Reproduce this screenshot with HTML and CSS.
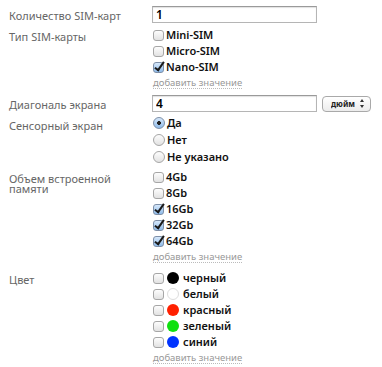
FILE: index.html
```html
<!DOCTYPE html>
<html lang="ru">
<head>
<meta charset="utf-8">
<link rel="stylesheet" href="styles.css">
</head>
<body>
<form class="form">
  <div class="label">Количество SIM-карт</div>
  <div class="field"><input class="text" type="text" value="1"></div>

  <div class="label">Тип SIM-карты</div>
  <div class="field">
    <label class="opt"><input class="cb" type="checkbox"><span>Mini-SIM</span></label>
    <label class="opt"><input class="cb" type="checkbox"><span>Micro-SIM</span></label>
    <label class="opt"><input class="cb" type="checkbox" checked><span>Nano-SIM</span></label>
    <a class="add" href="#">добавить значение</a>
  </div>

  <div class="label">Диагональ экрана</div>
  <div class="field inline">
    <input class="text" type="text" value="4">
    <span class="sel"><select><option>дюйм</option></select></span>
  </div>

  <div class="label">Сенсорный экран</div>
  <div class="field radios">
    <label class="opt"><input class="rb" type="radio" name="touch" checked><span>Да</span></label>
    <label class="opt"><input class="rb" type="radio" name="touch"><span>Нет</span></label>
    <label class="opt"><input class="rb" type="radio" name="touch"><span>Не указано</span></label>
  </div>

  <div class="label">Объем встроенной памяти</div>
  <div class="field">
    <label class="opt"><input class="cb" type="checkbox"><span>4Gb</span></label>
    <label class="opt"><input class="cb" type="checkbox"><span>8Gb</span></label>
    <label class="opt"><input class="cb" type="checkbox" checked><span>16Gb</span></label>
    <label class="opt"><input class="cb" type="checkbox" checked><span>32Gb</span></label>
    <label class="opt"><input class="cb" type="checkbox" checked><span>64Gb</span></label>
    <a class="add" href="#">добавить значение</a>
  </div>

  <div class="label colors">Цвет</div>
  <div class="field colors">
    <label class="opt"><input class="cb" type="checkbox"><i class="sw black"></i><span>черный</span></label>
    <label class="opt"><input class="cb" type="checkbox"><i class="sw white"></i><span>белый</span></label>
    <label class="opt"><input class="cb" type="checkbox"><i class="sw red"></i><span>красный</span></label>
    <label class="opt"><input class="cb" type="checkbox"><i class="sw green"></i><span>зеленый</span></label>
    <label class="opt"><input class="cb" type="checkbox"><i class="sw blue"></i><span>синий</span></label>
    <a class="add" href="#">добавить значение</a>
  </div>
</form>
</body>
</html>
```
FILE: styles.css
```css
html, body {
  margin: 0;
  padding: 0;
  background: #fff;
}
body {
  font-family: "Noto Sans", "DejaVu Sans", sans-serif;
  font-size: 11px;
  color: #000;
}
.form {
  display: grid;
  grid-template-columns: 143px 1fr;
  row-gap: 4px;
  padding: 6px 0 0 9px;
}
.label {
  color: #666;
  font-size: 11px;
  line-height: 10px;
  padding-top: 5px;
  width: 118px;
}
.field {
  display: flex;
  flex-direction: column;
  align-items: flex-start;
}
.field.inline {
  flex-direction: row;
  align-items: center;
  gap: 5px;
}
.field.radios {
  margin-top: -2px;
}
.label.colors,
.field.colors {
  margin-top: 1px;
}
.text {
  box-sizing: border-box;
  width: 165px;
  height: 17px;
  margin: 0;
  padding: 0 3px;
  border: 1px solid #b5b5b5;
  border-top-color: #9a9a9a;
  box-shadow: inset 0 1px 1px rgba(0,0,0,0.12);
  font-family: "Noto Sans", sans-serif;
  font-size: 12px;
  font-weight: 600;
  color: #000;
  outline: none;
}
.opt {
  display: flex;
  align-items: center;
  height: 16px;
  line-height: 16px;
  gap: 2px;
  padding-left: 1px;
  font-size: 11px;
  font-weight: 600;
  color: #111;
}
.radios .opt {
  height: 17px;
}
.cb, .rb {
  -webkit-appearance: none;
  appearance: none;
  box-sizing: border-box;
  margin: 0;
  width: 11px;
  height: 11px;
  border: 1px solid #a6a6a6;
  background: linear-gradient(#fdfdfd, #e2e2e2);
  position: relative;
  flex: none;
}
.cb {
  border-radius: 3px;
}
.cb:checked {
  background: linear-gradient(#d6e8fb, #8fbbe9);
  border-color: #7d8fa8;
}
.cb:checked::after {
  content: "";
  position: absolute;
  left: 3px;
  top: -3px;
  width: 3px;
  height: 9px;
  border: solid #1a1a1a;
  border-width: 0 2px 2px 0;
  transform: rotate(35deg);
}
.rb {
  width: 12px;
  height: 12px;
  border-radius: 50%;
}
.rb:checked {
  background: radial-gradient(circle, #222 0 1.6px, transparent 2.2px), linear-gradient(#d6e8fb, #8fbbe9);
  border-color: #7d8fa8;
}
.sw {
  display: block;
  box-sizing: border-box;
  width: 12px;
  height: 12px;
  border-radius: 50%;
  margin: 0 2px 0 1px;
  flex: none;
}
.sw.black { background: #000; }
.sw.white { background: #fff; border: 1px solid #ddd; }
.sw.red { background: #ff2000; }
.sw.green { background: #10e010; }
.sw.blue { background: #0033ff; }
.add {
  display: block;
  height: 16px;
  line-height: 16px;
  margin-left: 1px;
  font-size: 9.5px;
  color: #999;
  text-decoration: underline dotted #bbb;
  text-underline-offset: 2px;
}
.sel {
  position: relative;
  display: block;
}
.sel select {
  -webkit-appearance: none;
  appearance: none;
  box-sizing: border-box;
  width: 49px;
  height: 16px;
  margin: 0;
  padding: 0 0 0 8px;
  border: 1px solid #a9a9a9;
  border-radius: 4px;
  background: linear-gradient(#ffffff, #ececec);
  font-family: "Noto Sans", sans-serif;
  font-size: 8px;
  font-weight: 700;
  color: #222;
  outline: none;
}
.sel::after {
  content: "";
  position: absolute;
  right: 7px;
  top: 4px;
  width: 0;
  height: 0;
  border-left: 2px solid transparent;
  border-right: 2px solid transparent;
  border-bottom: 3px solid #333;
}
.sel::before {
  content: "";
  position: absolute;
  right: 7px;
  bottom: 4px;
  width: 0;
  height: 0;
  border-left: 2px solid transparent;
  border-right: 2px solid transparent;
  border-top: 3px solid #333;
  z-index: 1;
}
```
